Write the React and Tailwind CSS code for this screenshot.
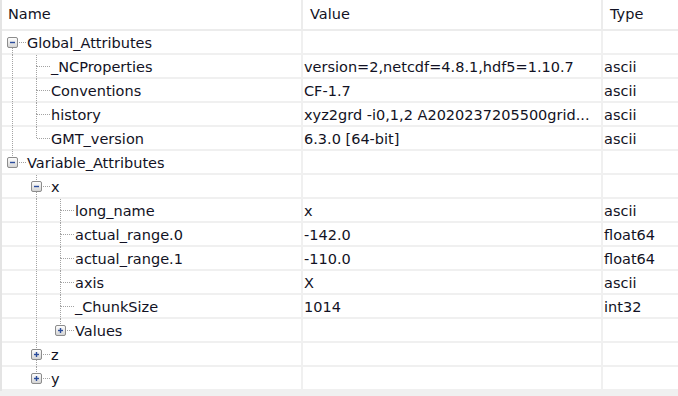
import React from 'react';

const rows = [
  { name: 'Global_Attributes', level: 0, kind: 'open', guides: [], last: false, first: true },
  { name: '_NCProperties', level: 1, kind: 'leaf', guides: [true], last: false, value: 'version=2,netcdf=4.8.1,hdf5=1.10.7', type: 'ascii' },
  { name: 'Conventions', level: 1, kind: 'leaf', guides: [true], last: false, value: 'CF-1.7', type: 'ascii' },
  { name: 'history', level: 1, kind: 'leaf', guides: [true], last: false, value: 'xyz2grd -i0,1,2 A2020237205500grid...', type: 'ascii' },
  { name: 'GMT_version', level: 1, kind: 'leaf', guides: [true], last: true, value: '6.3.0 [64-bit]', type: 'ascii' },
  { name: 'Variable_Attributes', level: 0, kind: 'open', guides: [], last: true },
  { name: 'x', level: 1, kind: 'open', guides: [false], last: false },
  { name: 'long_name', level: 2, kind: 'leaf', guides: [false, true], last: false, value: 'x', type: 'ascii' },
  { name: 'actual_range.0', level: 2, kind: 'leaf', guides: [false, true], last: false, value: '-142.0', type: 'float64' },
  { name: 'actual_range.1', level: 2, kind: 'leaf', guides: [false, true], last: false, value: '-110.0', type: 'float64' },
  { name: 'axis', level: 2, kind: 'leaf', guides: [false, true], last: false, value: 'X', type: 'ascii' },
  { name: '_ChunkSize', level: 2, kind: 'leaf', guides: [false, true], last: false, value: '1014', type: 'int32' },
  { name: 'Values', level: 2, kind: 'closed', guides: [false, true], last: true },
  { name: 'z', level: 1, kind: 'closed', guides: [false], last: false },
  { name: 'y', level: 1, kind: 'closed', guides: [false], last: true },
];

const DOT = '#a3a3a3';

// branch lines + expander box for one row of the tree
function Branches({ row }) {
  const w = 24 * (row.level + 1);
  const cx = 10 + 24 * row.level;
  const cy = 11;
  const hasBox = row.kind !== 'leaf';
  return (
    <svg width={w} height={22} className="shrink-0 overflow-visible">
      <defs>
        <linearGradient id="boxfill" x1="0" y1="0" x2="0" y2="1">
          <stop offset="0" stopColor="#ffffff" />
          <stop offset="1" stopColor="#d2d2d2" />
        </linearGradient>
      </defs>
      {row.guides.map((on, i) =>
        on ? (
          <line key={i} x1={10 + 24 * i + 0.5} y1={0} x2={10 + 24 * i + 0.5} y2={24} stroke={DOT} strokeDasharray="1 1" />
        ) : null
      )}
      {!row.first && (
        <line x1={cx + 0.5} y1={0} x2={cx + 0.5} y2={hasBox ? cy - 5 : cy} stroke={DOT} strokeDasharray="1 1" />
      )}
      {!row.last && (
        <line x1={cx + 0.5} y1={hasBox ? cy + 6 : cy} x2={cx + 0.5} y2={24} stroke={DOT} strokeDasharray="1 1" />
      )}
      <line x1={hasBox ? cx + 7 : cx + 1} y1={cy + 0.5} x2={w} y2={cy + 0.5} stroke={DOT} strokeDasharray="1 1" />
      {hasBox && (
        <g>
          <rect x={cx - 4.5} y={cy - 4.5} width={10} height={10} rx={1.5} fill="url(#boxfill)" stroke="#8c8c8c" />
          <line x1={cx - 2} y1={cy + 0.5} x2={cx + 3} y2={cy + 0.5} stroke="#2b4c9c" strokeWidth="1.4" />
          {row.kind === 'closed' && (
            <line x1={cx + 0.5} y1={cy - 2} x2={cx + 0.5} y2={cy + 3} stroke="#2b4c9c" strokeWidth="1.4" />
          )}
        </g>
      )}
    </svg>
  );
}

export default function App() {
  return (
    <div
      className="w-[678px] h-[396px] bg-[#f0f0f0] overflow-hidden text-[14.5px] text-[#121224]"
      style={{ fontFamily: '"DejaVu Sans", Verdana, sans-serif' }}
    >
      <div className="bg-white border-l-2 border-[#e4e4e4]">
        {/* header */}
        <div className="flex h-[31px] border-b-2 border-[#ececec]">
          <div className="w-[301px] border-r-2 border-[#ececec] pl-[6px] flex items-center">Name</div>
          <div className="w-[300px] border-r-2 border-[#ececec] pl-[7px] flex items-center">Value</div>
          <div className="flex-1 pl-[7px] flex items-center">Type</div>
        </div>

        {/* rows */}
        {rows.map((row, i) => (
          <div key={i} className="flex h-[24px] border-b-2 border-[#f0f0f0]">
            <div className="w-[301px] border-r-2 border-[#f0f0f0] flex items-start whitespace-nowrap">
              <Branches row={row} />
              <span className="pl-px pt-px leading-[22px]">{row.name}</span>
            </div>
            <div className="w-[300px] border-r-2 border-[#f0f0f0] pl-px pt-px leading-[22px] whitespace-nowrap overflow-hidden">
              {row.value}
            </div>
            <div className="flex-1 pl-px pt-px leading-[22px] whitespace-nowrap">{row.type}</div>
          </div>
        ))}
      </div>
    </div>
  );
}
